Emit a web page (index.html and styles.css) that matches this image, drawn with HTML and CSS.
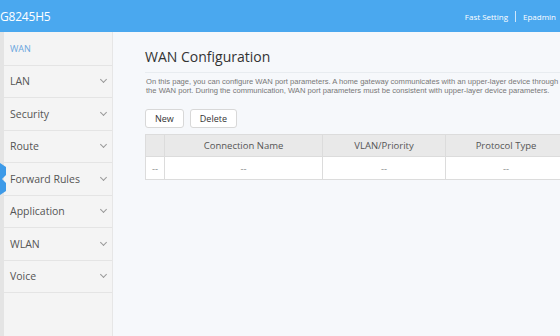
FILE: index.html
```html
<!DOCTYPE html>
<html lang="en">
  <head>
    <meta charset="utf-8"/>
    <title>WAN Configuration</title>
    <link rel="stylesheet" href="styles.css">
  </head>
  <body>
    <div class="top">
      <div class="model">G8245H5</div>
      <div class="links">
        <span>Fast Setting</span>
        <span class="sep"></span>
        <span>Epadmin</span>
      </div>
    </div>
    <div class="frame">
      <div class="menu">
        <div class="item current">WAN</div>
        <div class="item">LAN<span class="arrow"></span></div>
        <div class="item">Security<span class="arrow"></span></div>
        <div class="item">Route<span class="arrow"></span></div>
        <div class="item">Forward Rules<span class="arrow"></span></div>
        <div class="item">Application<span class="arrow"></span></div>
        <div class="item">WLAN<span class="arrow"></span></div>
        <div class="item">Voice<span class="arrow"></span></div>
        <svg class="fold" width="6" height="32" viewBox="0 0 6 32">
          <path d="M0 0 L6 4 L6 12 L2 16 L6 20 L6 28 L0 32 Z" fill="#3d9ae8"/>
        </svg>
      </div>
      <div class="main">
        <h1>WAN Configuration</h1>
        <p class="desc">On this page, you can configure WAN port parameters. A home gateway communicates with an upper-layer device through<br/>the WAN port. During the communication, WAN port parameters must be consistent with upper-layer device parameters.</p>
        <div class="buttons">
          <button class="btn">New</button>
          <button class="btn">Delete</button>
        </div>
        <table>
          <tr>
            <th class="c0"></th>
            <th class="c1">Connection Name</th>
            <th class="c2">VLAN/Priority</th>
            <th class="c3">Protocol Type</th>
          </tr>
          <tr>
            <td>--</td>
            <td>--</td>
            <td>--</td>
            <td>--</td>
          </tr>
        </table>
      </div>
    </div>
  </body>
</html>
```

FILE: styles.css
```css
body {
  margin: 0;
  width: 560px;
  height: 336px;
  overflow: hidden;
  font-family: "Open Sans", "Liberation Sans", sans-serif;
  background-color: #f6f8fb;
}
.top {
  height: 32px;
  background-color: #4aa8ef;
  color: #fff;
  display: flex;
  align-items: center;
  justify-content: space-between;
}
.model {
  font-size: 12px;
  letter-spacing: -0.2px;
}
.links {
  display: flex;
  align-items: center;
  font-size: 8px;
  padding-right: 4px;
  white-space: nowrap;
}
.sep {
  width: 1px;
  height: 11px;
  background-color: #cfe7fb;
  margin: 0 7px;
}
.frame {
  display: flex;
  height: 304px;
}
.menu {
  position: relative;
  width: 108px;
  flex: none;
  background-color: #f4f4f4;
  border-left: 4px solid #e4e4e4;
  border-right: 1px solid #e6e6e6;
}
.item {
  height: 31.5px;
  border-bottom: 1px solid #e4e4e4;
  display: flex;
  align-items: center;
  justify-content: space-between;
  padding: 0 4px 0 6px;
  font-size: 10.5px;
  color: #555;
}
.item.current {
  height: 32.5px;
  color: #6aa6de;
  font-size: 9px;
}
.arrow {
  width: 4px;
  height: 4px;
  border-right: 1px solid #999;
  border-bottom: 1px solid #999;
  transform: rotate(45deg);
  margin-right: 2px;
  margin-top: -3px;
}
.fold {
  position: absolute;
  left: -4px;
  top: 131px;
}
.main {
  flex: none;
  width: 460px;
  padding: 0 0 0 32px;
}
h1 {
  margin: 15px 0 0;
  font-weight: normal;
  font-size: 14px;
  color: #333;
  padding-bottom: 6px;
  border-bottom: 1px solid #e8ecf0;
}
.desc {
  margin: 4px 0 0 1px;
  font-family: "Liberation Sans", sans-serif;
  font-size: 7.6px;
  line-height: 9px;
  color: #777;
  white-space: nowrap;
}
.buttons {
  display: flex;
  gap: 6px;
  margin-top: 14px;
}
.btn {
  height: 19px;
  padding: 0 9px;
  background-color: #fff;
  border: 1px solid #d8d8d8;
  border-radius: 3px;
  font-family: "Open Sans", "Liberation Sans", sans-serif;
  font-size: 9px;
  color: #333;
}
table {
  margin-top: 6px;
  border-collapse: collapse;
  background-color: #fff;
  font-size: 9.5px;
  color: #555;
}
th, td {
  border: 1px solid #dcdcdc;
  text-align: center;
  padding: 0;
}
th {
  height: 21px;
  background-color: #e9e9e9;
  font-weight: normal;
}
td {
  height: 22px;
  color: #888;
}
.c0 { width: 18px; }
.c1 { width: 157px; }
.c2 { width: 122px; }
.c3 { width: 120px; }
```
